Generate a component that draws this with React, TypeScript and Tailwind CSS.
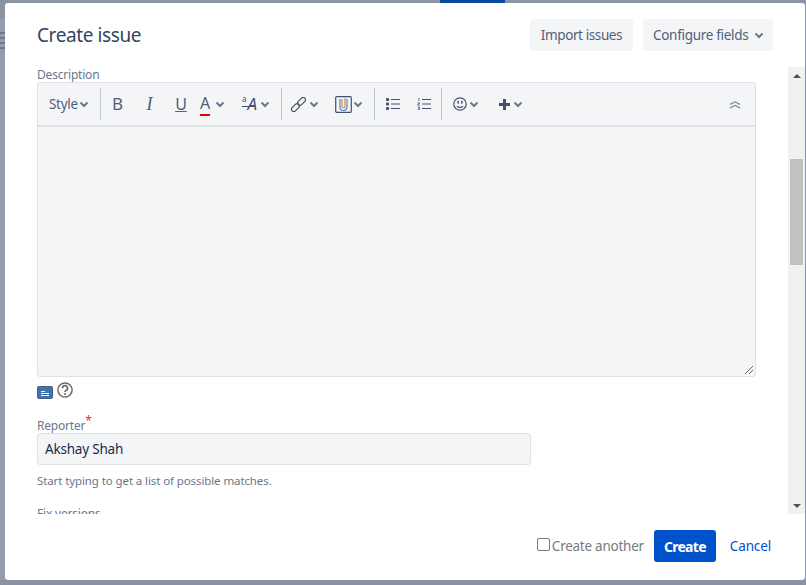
const font = { fontFamily: '"Noto Sans", "Open Sans", sans-serif' };

function Chevron({ className = "" }: { className?: string }) {
  return (
    <svg width="10" height="7" viewBox="0 0 10 7" className={`shrink-0 ${className}`}>
      <path d="M1.5 1.5 L5 5 L8.5 1.5" fill="none" stroke="#6b778c" strokeWidth="2" />
    </svg>
  );
}

function Separator() {
  return <div className="w-px h-[32px] bg-[#c1c7d0] shrink-0" />;
}

function LinkIcon() {
  return (
    <svg width="15" height="15" viewBox="0 0 15 15" fill="none" stroke="#42526e" strokeWidth="1.2">
      <rect x="-4.6" y="-2.3" width="9.2" height="4.6" rx="2.3" transform="translate(4.4 10.6) rotate(-45)" />
      <rect x="-4.6" y="-2.3" width="9.2" height="4.6" rx="2.3" transform="translate(10.6 4.4) rotate(-45)" />
    </svg>
  );
}

function AttachIcon() {
  return (
    <svg width="17" height="17" viewBox="0 0 17 17" fill="none">
      <rect x="0.7" y="0.7" width="15.6" height="15.6" rx="1" stroke="#42526e" strokeWidth="1.2" />
      <path d="M5 3v8a3.5 3.5 0 0 0 7 0V3" stroke="#5a87b8" strokeWidth="1.2" />
      <path d="M7 3v7.5a1.5 1.5 0 0 0 3 0V2" stroke="#d98a4a" strokeWidth="1.2" />
    </svg>
  );
}

function BulletIcon() {
  return (
    <svg width="14" height="12" viewBox="0 0 14 12" className="shrink-0">
      <path d="M5 1.5h9M5 6h9M5 10.5h9" stroke="#42526e" strokeWidth="1" />
      <rect x="0" y="0" width="3" height="3" rx="0.8" fill="#42526e" />
      <rect x="0" y="4.5" width="3" height="3" rx="0.8" fill="#42526e" />
      <rect x="0" y="9" width="3" height="3" rx="0.8" fill="#42526e" />
    </svg>
  );
}

function NumberIcon() {
  return (
    <svg width="14" height="12" viewBox="0 0 14 12" className="shrink-0">
      <path d="M5 1.5h9M5 6h9M5 10.5h9" stroke="#42526e" strokeWidth="1" />
      <path d="M1 0.5h1v2.6M0.5 4.8h2v1.2H0.7v1.2h2M0.5 9h2v2.6H0.5M1 10.3h1.5" stroke="#42526e" strokeWidth="0.7" fill="none" />
    </svg>
  );
}

function SmileIcon() {
  return (
    <svg width="14" height="14" viewBox="0 0 14 14" fill="none">
      <circle cx="7" cy="7" r="6.2" stroke="#42526e" strokeWidth="1.2" />
      <path d="M5.2 3.8v3M8.8 3.8v3" stroke="#42526e" strokeWidth="1.4" />
      <path d="M4 9.3c1.6 1.4 4.4 1.4 6 0" stroke="#42526e" strokeWidth="1.2" />
    </svg>
  );
}

function PlusIcon() {
  return (
    <svg width="13" height="13" viewBox="0 0 13 13">
      <path d="M6.5 1v11M1 6.5h11" stroke="#42526e" strokeWidth="3" />
    </svg>
  );
}

function CollapseIcon() {
  return (
    <svg width="12" height="9" viewBox="0 0 12 9" fill="none">
      <path d="M1 4.5L6 1.8L11 4.5M1 8L6 5.3L11 8" stroke="#6b778c" strokeWidth="1.1" />
    </svg>
  );
}

function Toolbar() {
  return (
    <div className="flex items-center h-[44px] border-b-2 border-[#dfe1e6] text-[#42526e] shrink-0">
      <div className="flex items-center w-[62px] pl-[11px] shrink-0">
        <span className="text-[13.5px] tracking-[-0.3px] text-[#505f79]">Style</span>
        <Chevron className="ml-[1px]" />
      </div>
      <Separator />
      <span className="w-[33px] text-center text-[17px] shrink-0 text-[#505f79]">B</span>
      <span className="w-[31px] text-center text-[18px] italic shrink-0 text-[#505f79]" style={{ fontFamily: '"Liberation Serif", serif' }}>I</span>
      <span className="w-[32px] text-center text-[16px] underline shrink-0 text-[#505f79]">U</span>
      <div className="flex items-center w-[38px] pl-[3px] shrink-0">
        <span className="relative text-[16px] leading-none text-[#505f79] pb-[2px]">
          A
          <span className="absolute left-0 right-0 -bottom-[3px] h-[2px] bg-[#e60000]" />
        </span>
        <Chevron className="ml-[5px]" />
      </div>
      <div className="flex items-center w-[46px] pl-[7px] shrink-0">
        <span className="relative flex items-start h-[16px] w-[17px]">
          <span className="text-[8px] leading-[8px] text-[#42526e] mt-[-1px]">a</span>
          <span className="text-[17px] italic leading-[16px] text-[#42526e] ml-[1px]">A</span>
          <span className="absolute left-0 w-[13px] top-[10px] h-px bg-[#42526e]" />
        </span>
        <Chevron className="ml-[1px]" />
      </div>
      <Separator />
      <div className="flex items-center w-[44px] pl-[9px] shrink-0">
        <LinkIcon />
        <Chevron className="ml-[3px]" />
      </div>
      <div className="flex items-center w-[48px] pl-[9px] shrink-0">
        <AttachIcon />
        <Chevron className="ml-[1px]" />
      </div>
      <Separator />
      <div className="w-[66px] flex items-center gap-[17px] pl-[11px] shrink-0">
        <BulletIcon />
        <NumberIcon />
      </div>
      <Separator />
      <div className="flex items-center w-[45px] pl-[11px] shrink-0">
        <SmileIcon />
        <Chevron className="ml-[2px]" />
      </div>
      <div className="flex items-center pl-[11px] shrink-0">
        <PlusIcon />
        <Chevron className="ml-[2px]" />
      </div>
      <div className="ml-auto pr-[14px] flex"><CollapseIcon /></div>
    </div>
  );
}

function ScrollBar() {
  return (
    <div className="w-[17px] bg-[#f1f1f1] flex flex-col items-center shrink-0">
      <div className="h-[17px] flex items-center justify-center shrink-0">
        <div className="w-0 h-0 border-x-[4px] border-x-transparent border-b-[4px] border-b-[#505050]" />
      </div>
      <div className="mt-[75px] h-[106px] w-[13px] bg-[#c1c1c1]" />
      <div className="mt-auto h-[17px] flex items-center justify-center shrink-0">
        <div className="w-0 h-0 border-x-[4px] border-x-transparent border-t-[4px] border-t-[#505050]" />
      </div>
    </div>
  );
}

function LeftStrip() {
  return (
    <div className="w-[5px] flex flex-col shrink-0">
      <div className="h-[16px]" />
      <div className="flex-1 bg-[#949dac] pt-[13px] flex flex-col gap-[3px]">
        <div className="h-[2px] bg-[#6f7888]" />
        <div className="h-[2px] bg-[#6f7888]" />
        <div className="h-[2px] bg-[#6f7888]" />
        <div className="h-[2px] bg-[#6f7888]" />
      </div>
    </div>
  );
}

export default function App() {
  return (
    <div className="w-[806px] h-[585px] bg-[#8993a4] flex flex-col overflow-hidden" style={font}>
      <div className="h-[3px] flex shrink-0">
        <div className="w-[440px]" />
        <div className="w-[65px] bg-[#0b4a9c]" />
      </div>
      <div className="h-[577px] flex shrink-0">
        <LeftStrip />
        <div className="w-[800px] bg-white rounded-[3px] flex flex-col">
          <div className="h-[64px] flex items-start justify-between pl-[32px] pr-[32px] pt-[16px] shrink-0">
            <h2 className="text-[19px] leading-[32px] text-[#344563] tracking-[-0.4px]">Create issue</h2>
            <div className="flex gap-[10px]">
              <button className="h-[32px] w-[103px] bg-[#f4f5f7] rounded-[3px] text-[13.5px] tracking-[-0.4px] text-[#505f79]">
                Import issues
              </button>
              <button className="h-[32px] w-[130px] pl-[10px] bg-[#f4f5f7] rounded-[3px] text-[13.5px] tracking-[-0.3px] text-[#505f79] flex items-center gap-[6px]">
                Configure fields
                <Chevron />
              </button>
            </div>
          </div>
          <div className="h-[447px] flex shrink-0">
            <div className="flex-1 overflow-hidden pl-[32px] pr-[32px]">
              <label className="block text-[12px] leading-[15px] text-[#6b778c] tracking-[-0.2px]">Description</label>
              <div className="w-[719px] h-[295px] bg-[#f4f5f7] border border-[#dfe1e6] rounded-[3px] flex flex-col relative">
                <Toolbar />
                <svg width="10" height="10" viewBox="0 0 10 10" className="absolute right-[1px] bottom-[1px]">
                  <path d="M1 9L9 1M5 9L9 5" stroke="#555" strokeWidth="0.9" />
                </svg>
              </div>
              <div className="flex items-start gap-[4px] h-[25px] mt-[5px]">
                <svg width="16" height="13" viewBox="0 0 16 13" className="mt-[4px]">
                  <rect x="0.5" y="0.5" width="15" height="12" rx="1" fill="#3d74b0" stroke="#4a5f7d" />
                  <path d="M4 5.5h4M4 7.5h8M4 9.5h8" stroke="#fff" strokeWidth="1" />
                </svg>
                <svg width="16" height="16" viewBox="0 0 16 16" fill="none">
                  <circle cx="8" cy="8" r="7.1" stroke="#6b6b6b" strokeWidth="1.5" />
                  <path d="M5.5 6.2a2.5 2.5 0 1 1 3.6 2.2c-.8.4-1.1.8-1.1 1.6" stroke="#6b6b6b" strokeWidth="1.7" />
                  <circle cx="8" cy="12" r="1.1" fill="#6b6b6b" />
                </svg>
              </div>
              <label className="block mt-[8px] text-[12px] leading-[15px] text-[#6b778c] tracking-[-0.2px]">
                Reporter<span className="text-[#de350b] text-[12px] align-super leading-none">*</span>
              </label>
              <div className="w-[494px] h-[32px] bg-[#f4f5f7] border border-[#dfe1e6] rounded-[3px] flex items-center pl-[7px] text-[13.5px] tracking-[-0.2px] text-[#172b4d]">
                Akshay Shah
              </div>
              <p className="mt-[8px] text-[11.5px] leading-[16px] text-[#6b778c] tracking-[-0.1px]">Start typing to get a list of possible matches.</p>
              <label className="block mt-[17px] text-[12px] leading-[15px] text-[#6b778c] tracking-[-0.2px]">Fix versions</label>
            </div>
            <ScrollBar />
          </div>
          <div className="flex-1 flex items-start justify-end pt-[16px] pr-[34px]">
            <label className="flex items-center h-[32px] text-[13.5px] tracking-[-0.25px] text-[#7a7a7a]">
              <span className="w-[13px] h-[13px] border border-[#767676] rounded-[2px] bg-white mr-[2px] -mt-[3px]" />
              Create another
            </label>
            <button className="ml-[10px] w-[62px] h-[32px] bg-[#0052cc] rounded-[3px] text-white text-[14px] font-bold tracking-[-0.7px]">
              Create
            </button>
            <a className="ml-[14px] leading-[32px] text-[13.5px] tracking-[-0.15px] text-[#0052cc]">Cancel</a>
          </div>
        </div>
      </div>
    </div>
  );
}
